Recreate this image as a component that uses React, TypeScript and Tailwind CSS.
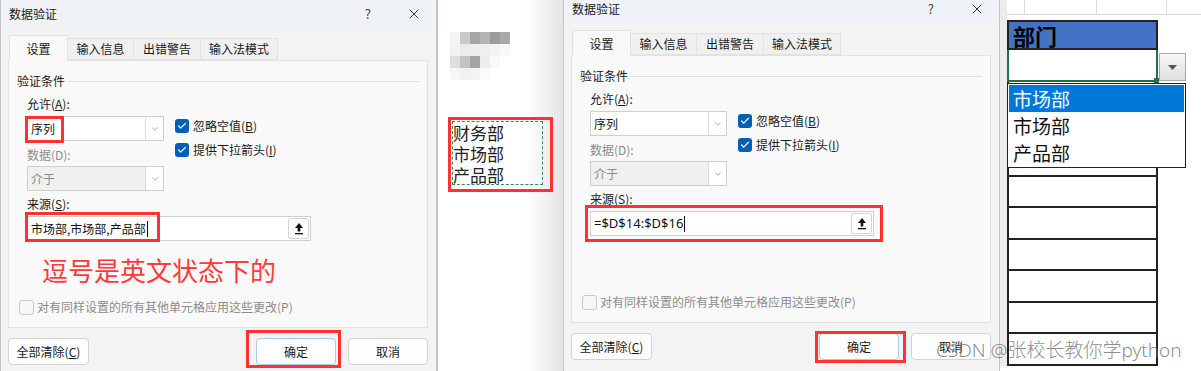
import React from 'react';
import { Check, ChevronDown, X } from 'lucide-react';

const RED = 'border-[#ff3131]';

// 来源 右侧的折叠按钮
const CollapseIcon = () => (
  <svg width="10" height="13" viewBox="0 0 10 13">
    <path d="M5 1 L9 6 L6.3 6 L6.3 9.5 L3.7 9.5 L3.7 6 L1 6 Z" fill="#111" />
    <rect x="1" y="11" width="8" height="1.3" fill="#111" />
  </svg>
);

const Select = ({ value, disabled }: { value: string; disabled?: boolean }) => (
  <div
    className={`flex h-[25px] w-[137px] items-center border border-[#cfcfcf] ${
      disabled ? 'bg-[#f0f0f0] text-[#8c8c8c]' : 'bg-white text-[#1a1a1a]'
    }`}
  >
    <span className="flex-1 pl-[3px] text-[12px]">{value}</span>
    <div className="flex h-full w-[18px] items-center justify-center border-l border-[#dcdcdc] bg-white">
      <ChevronDown className="h-[10px] w-[10px] text-[#777]" strokeWidth={1.5} />
    </div>
  </div>
);

const CheckItem = ({ label, hot }: { label: string; hot: string }) => (
  <div className="flex h-[14px] items-center">
    <div className="flex h-[14px] w-[14px] items-center justify-center rounded-[3px] bg-[#005fb8]">
      <Check className="h-[10px] w-[10px] text-white" strokeWidth={3} />
    </div>
    <span className="ml-[4px] text-[12px] text-[#1a1a1a]">
      {label}(<u>{hot}</u>)
    </span>
  </div>
);

interface DialogProps {
  source: string;
  sourceSize: string;
  note?: boolean;
  lift?: boolean;
  marks: { left: number; top: number; w: number; h: number }[];
}

const Dialog: React.FC<DialogProps> = ({ source, sourceSize, note, lift, marks }) => {
  return (
    <div className="relative h-full w-[437px] shrink-0 overflow-hidden border-x border-[#c6c6c6] bg-[#f3f3f3]">
      <div className={lift ? 'mt-[-5px]' : ''}>
        {/* 标题栏 */}
        <div className="flex h-[28px] items-center bg-[#eff3f8] pl-[8px] pr-[14px] text-[#1a1a1a]">
          <span className="text-[12px]">数据验证</span>
          <span className="ml-auto text-[13px] text-[#444]">?</span>
          <X className="ml-[35px] h-[16px] w-[16px]" strokeWidth={1.3} />
        </div>

        {/* 选项卡 */}
        <div className="mt-[7px] flex h-[25px] items-end pl-[8px] text-[12px] text-[#1a1a1a]">
          <div className="relative z-10 mb-[-1px] flex h-[26px] w-[59px] items-center justify-center border border-b-0 border-[#e2e2e2] bg-[#f9f9f9]">
            设置
          </div>
          <div className="flex h-[22px] w-[66px] items-center justify-center border border-l-0 border-[#e2e2e2] bg-[#f0f0f0]">
            输入信息
          </div>
          <div className="flex h-[22px] w-[67px] items-center justify-center border border-l-0 border-[#e2e2e2] bg-[#f0f0f0]">
            出错警告
          </div>
          <div className="flex h-[22px] w-[77px] items-center justify-center border border-l-0 border-[#e2e2e2] bg-[#f0f0f0]">
            输入法模式
          </div>
        </div>

        {/* 设置面板 */}
        <div className="ml-[7px] h-[268px] w-[420px] border border-[#e2e2e2] bg-[#f9f9f9] text-[12px] text-[#1a1a1a]">
          <div className="mt-[12px] flex items-center pl-[8px] pr-[8px]">
            <span className="leading-[16px]">验证条件</span>
            <div className="ml-[4px] h-px flex-1 bg-[#e0e0e0]" />
          </div>

          <div className="ml-[18px] mt-[7px] flex">
            <div className="w-[137px]">
              <div className="h-[16px] leading-[16px]">
                允许(<u>A</u>):
              </div>
              <div className="mt-[4px]">
                <Select value="序列" />
              </div>
              <div className="mt-[6px] h-[16px] leading-[16px] text-[#8c8c8c]">数据(D):</div>
              <div className="mt-[3px]">
                <Select value="介于" disabled />
              </div>
            </div>
            <div className="ml-[11px] flex flex-col gap-[10px] pt-[23px]">
              <CheckItem label="忽略空值" hot="B" />
              <CheckItem label="提供下拉箭头" hot="I" />
            </div>
          </div>

          <div className="ml-[18px] mt-[5px] h-[16px] leading-[16px]">
            来源(<u>S</u>):
          </div>
          <div className="ml-[18px] mt-[4px] flex h-[25px] w-[284px] items-center border border-[#cfcfcf] bg-white pl-[3px] pr-px">
            <span className={`${sourceSize} text-[#111]`}>{source}</span>
            <span className="ml-px h-[16px] w-px bg-[#111]" />
            <div className="ml-auto flex h-[21px] w-[21px] items-center justify-center rounded-[2px] border border-[#d4d4d4] bg-white">
              <CollapseIcon />
            </div>
          </div>

          {note ? (
            <div className="ml-[33px] mt-[14px] h-[30px] text-[26px] leading-[30px] text-[#ff3a3a]">
              逗号是英文状态下的
            </div>
          ) : (
            <div className="mt-[14px] h-[30px]" />
          )}

          <div className="ml-[10px] mt-[13px] flex items-center">
            <div className="h-[15px] w-[15px] rounded-[3px] border border-[#c9c9c9] bg-[#f7f7f7]" />
            <span className="ml-[3px] text-[#8c8c8c]">对有同样设置的所有其他单元格应用这些更改(P)</span>
          </div>
        </div>

        {/* 按钮 */}
        <div className="mt-[10px] flex pl-[7px] pr-[8px] text-[12px] text-[#1a1a1a]">
          <div className="flex h-[27px] w-[81px] items-center justify-center rounded-[4px] border border-[#d3d3d3] bg-[#fdfdfd]">
            全部清除(<u>C</u>)
          </div>
          <div className="ml-auto flex h-[27px] w-[80px] items-center justify-center rounded-[4px] border border-[#a9c7e6] bg-[#fdfdfd]">
            确定
          </div>
          <div className="ml-[12px] flex h-[27px] w-[80px] items-center justify-center rounded-[4px] border border-[#d3d3d3] bg-[#fdfdfd]">
            取消
          </div>
        </div>
      </div>

      {/* 红框标注 */}
      {marks.map((m, i) => (
        <div
          key={i}
          className={`pointer-events-none absolute border-[3px] ${RED}`}
          style={{ left: m.left, top: m.top, width: m.w, height: m.h }}
        />
      ))}
    </div>
  );
};

// 打码的区域
const mosaic = [
  ['#f4f4f4', '#c9c9c9', '#a6a6a6', '#b4b4b4', '#9c9c9c', '#a9a9a9'],
  ['#f2f2f2', '#ececec', '#eeeeee', '#efefef', '#f3f3f3', '#f8f8f8'],
  ['#dedede', '#c3c3c3', '#a3a3a3', '#eeeeee', '#f8f8f8', '#ffffff'],
  ['#f6f6f6', '#f1f1f1', '#f3f3f3', '#fbfbfb', '#ffffff', '#ffffff'],
];

const Middle = () => (
  <div className="h-full w-[126px] shrink-0 border-l border-[#c4c4c4] bg-[linear-gradient(to_right,#ffffff_70%,#e4e4e4)] pl-[10px]">
    <div className="mt-[32px] ml-[2px] flex w-[60px] flex-col">
      {mosaic.map((row, r) => (
        <div key={r} className="flex h-[12px]">
          {row.map((c, i) => (
            <div key={i} className="h-full w-[10px]" style={{ background: c }} />
          ))}
        </div>
      ))}
    </div>
    <div className={`mt-[37px] h-[75px] w-[105px] border-[3px] ${RED} pl-px pt-px`}>
      <div className="h-[64px] w-[91px] border-[1.5px] border-dashed border-[#3b8a5c] text-[17px] leading-[21px] text-[#222]">
        <div>财务部</div>
        <div>市场部</div>
        <div>产品部</div>
      </div>
    </div>
  </div>
);

const Sheet = () => (
  <div className="relative h-full flex-1 bg-white">
    <div className="flex h-[20px]">
      <div className="w-[7px] bg-[#ececec]" />
      <div className="h-[15px] w-[18px] border-b border-r border-[#dcdcdc]" />
      <div className="h-[15px] w-[72px] border-b border-r border-[#dcdcdc]" />
      <div className="h-[15px] w-[70px] border-b border-r border-[#dcdcdc]" />
      <div className="h-[15px] flex-1 border-b border-[#dcdcdc]" />
    </div>
    <div className="flex">
      <div className="w-[7px] bg-[#ececec]" />
      <div className="w-[151px]">
        <div className="flex h-[30px] items-center border-2 border-[#222] bg-[#4472c4] pl-[4px] text-[22px] font-bold text-black">
          部门
        </div>
        <div className="relative h-[32px] border-2 border-t-0 border-[#217346] bg-white">
          <div className="absolute bottom-[-3px] right-[-3px] h-[5px] w-[5px] bg-[#217346]" />
        </div>
        {Array.from({ length: 9 }).map((_, i) => (
          <div key={i} className="h-[31.5px] border-2 border-t-0 border-[#222] bg-white" />
        ))}
      </div>
      <div className="pl-px pt-[33px]">
        <div className="flex h-[28px] w-[27px] items-center justify-center border border-[#a8a8a8] bg-[linear-gradient(#f7f7f7,#dedede)]">
          <svg width="9" height="5" viewBox="0 0 9 5">
            <path d="M0 0 H9 L4.5 5 Z" fill="#555" />
          </svg>
        </div>
      </div>
    </div>

    {/* 下拉列表 */}
    <div className="absolute left-[7px] top-[83px] w-[179px] border border-[#222] bg-white p-px text-[19px] leading-[27px] text-[#111]">
      <div className="bg-[#0078d7] pl-[4px] text-white">市场部</div>
      <div className="pl-[4px]">市场部</div>
      <div className="pl-[4px]">产品部</div>
    </div>
  </div>
);

export default function App() {
  return (
    <div className="relative flex h-[371px] w-[1201px] overflow-hidden bg-white font-['Noto_Sans_CJK_SC',sans-serif]">
      <Dialog
        source="市场部,市场部,产品部"
        sourceSize="text-[12px]"
        note
        marks={[
          { left: 18, top: 37, w: 43, h: 24 },
          { left: 24, top: 116, w: 39, h: 27 },
          { left: 24, top: 212, w: 135, h: 30 },
          { left: 245, top: 330, w: 95, h: 38 },
        ]}
      />
      <Middle />
      <Dialog
        source="=$D$14:$D$16"
        sourceSize="text-[13px] font-['Noto_Sans',sans-serif]"
        lift
        marks={[
          { left: 21, top: 205, w: 298, h: 37 },
          { left: 251, top: 331, w: 91, h: 32 },
        ]}
      />
      <Sheet />

      {/* 水印 */}
      <div className="pointer-events-none absolute left-[936px] top-[337px] font-['Noto_Sans','Noto_Sans_CJK_SC',sans-serif] text-[19px] font-light leading-[26px] text-[#6e6e6e]/80">
        CSDN @张校长教你学python
      </div>
    </div>
  );
}
